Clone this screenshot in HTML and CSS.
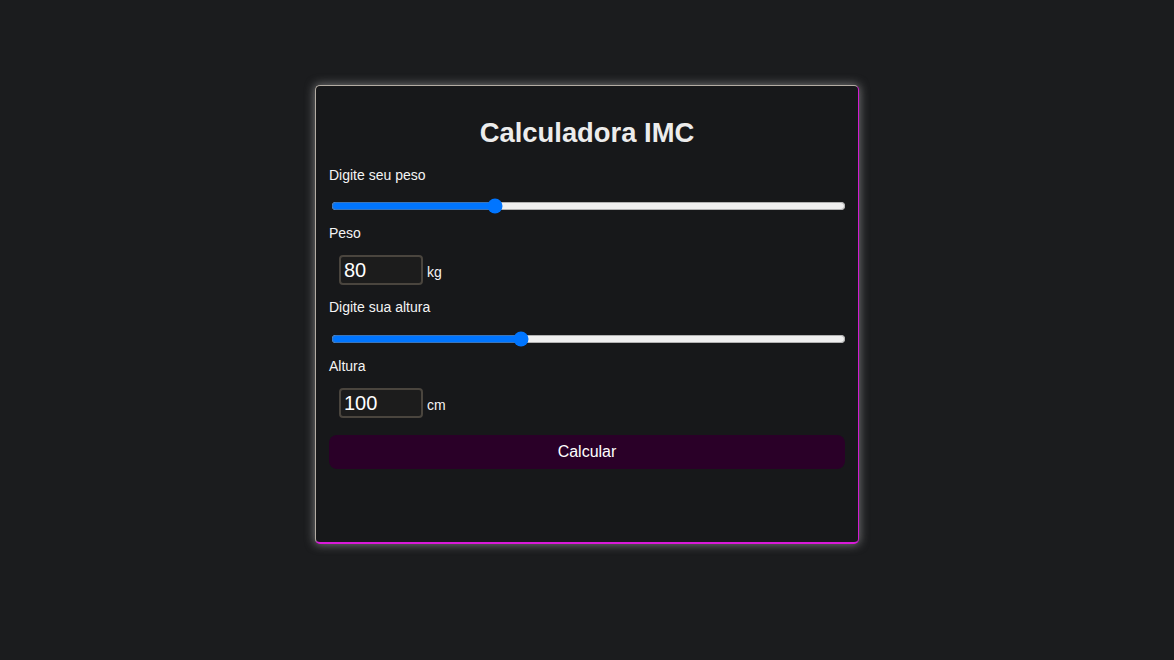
FILE: index.html
```html
<!DOCTYPE html>
<html lang="pt">
<head>
<meta charset="utf-8">
<title>Calculadora IMC</title>
<link rel="stylesheet" href="styles.css">
</head>
<body>
<main class="card">
  <h1 class="title">Calculadora IMC</h1>
  <label class="label label-first" for="peso-range">Digite seu peso</label>
  <input class="range" id="peso-range" type="range" min="30" max="190" value="80">
  <label class="label label-after-range" for="peso">Peso</label>
  <div class="field">
    <input class="number" id="peso" type="number" value="80">
    <span class="unit">kg</span>
  </div>
  <label class="label label-after-field" for="altura-range">Digite sua altura</label>
  <input class="range range-second" id="altura-range" type="range" min="0" max="274" value="100">
  <label class="label label-after-range" for="altura">Altura</label>
  <div class="field">
    <input class="number" id="altura" type="number" value="100">
    <span class="unit">cm</span>
  </div>
  <button class="btn" type="button">Calcular</button>
</main>
</body>
</html>
```
FILE: styles.css
```css
html, body {
  margin: 0;
  padding: 0;
}
body {
  background: #1b1c1e;
  font-family: "Liberation Sans", Arial, sans-serif;
  color: #f2f2f2;
  min-height: 660px;
}
.card {
  box-sizing: border-box;
  width: 544px;
  height: 459px;
  margin: 85px auto 0;
  padding: 13px 13px;
  background: #17181a;
  border-style: solid;
  border-width: 1px 1px 2px 1px;
  border-top-color: #b3aca3;
  border-left-color: #b3aca3;
  border-right-color: #d21cd2;
  border-bottom-color: #d81ad8;
  border-radius: 5px;
  box-shadow: 0 0 10px 1px rgba(200, 200, 200, 0.5);
  display: flex;
  flex-direction: column;
  align-items: flex-start;
}
.title {
  align-self: stretch;
  text-align: center;
  margin: 18px 0 0;
  font-size: 27.4px;
  line-height: 32px;
  font-weight: bold;
  color: #ececec;
}
.label {
  display: block;
  font-size: 14px;
  line-height: 16px;
  color: #f4f4f4;
}
.label-first {
  margin-top: 18px;
}
.label-after-range {
  margin-top: 11px;
}
.label-after-field {
  margin-top: 14px;
}
.range {
  box-sizing: border-box;
  width: 515px;
  height: 16px;
  margin: 15px 0 0 2px;
}
.range-second {
  margin-top: 16px;
}
.field {
  display: flex;
  align-items: baseline;
  margin: 14px 0 0 10px;
}
.number {
  box-sizing: border-box;
  width: 84px;
  height: 30px;
  padding: 0 3px;
  background: #1c1c1c;
  color: #ffffff;
  border: 2px solid #4a453e;
  border-radius: 4px;
  font-family: "Liberation Sans", Arial, sans-serif;
  font-size: 20px;
  outline: none;
}
.unit {
  margin-left: 4px;
  font-size: 14px;
  color: #f4f4f4;
}
.btn {
  align-self: stretch;
  margin-top: 17px;
  height: 34px;
  background: #2a0028;
  color: #ffffff;
  border: none;
  border-radius: 8px;
  font-family: "Liberation Sans", Arial, sans-serif;
  font-size: 16px;
  cursor: pointer;
}
```
